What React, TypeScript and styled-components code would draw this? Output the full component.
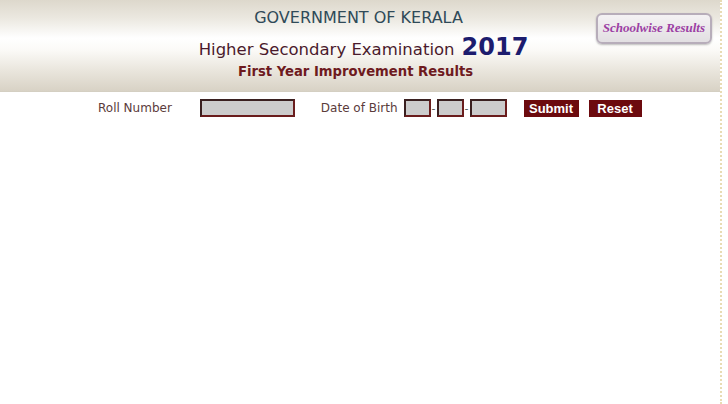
import React from "react";
import styled, { createGlobalStyle } from "styled-components";

const GlobalStyle = createGlobalStyle`
  html, body {
    margin: 0;
    padding: 0;
    background: #ffffff;
  }
  body {
    font-family: "DejaVu Sans", Verdana, sans-serif;
  }
`;

const Page = styled.div`
  width: 720px;
  height: 404px;
  border-right: 2px dotted #e8dcb4;
  box-sizing: content-box;
  overflow: hidden;
`;

const Header = styled.header`
  height: 91px;
  border-bottom: 1px solid #d4cfc2;
  background: linear-gradient(
    to bottom,
    #ddd8cc 0%,
    #ebe8e0 20%,
    #ffffff 42%,
    #fbfaf7 55%,
    #e9e5dc 78%,
    #d8d2c5 100%
  );
  display: grid;
  grid-template-columns: 1fr auto 1fr;
`;

const TitleBlock = styled.div`
  grid-column: 2;
  display: flex;
  flex-direction: column;
  align-items: center;
  padding-top: 9px;
`;

const Gov = styled.div`
  font-size: 16px;
  color: #2f4a58;
  line-height: 18px;
  margin-right: 3px;
`;

const ExamLine = styled.div`
  display: flex;
  align-items: baseline;
  gap: 7px;
  margin: 7px 0 0 7px;
  line-height: 26px;
`;

const Exam = styled.span`
  font-size: 16.5px;
  color: #4a1a2c;
`;

const Year = styled.span`
  font-size: 24px;
  font-weight: bold;
  color: #1c1c6e;
`;

const Sub = styled.div`
  font-size: 13.2px;
  font-weight: bold;
  color: #6e1a1e;
  line-height: 16px;
  margin: 1px 9px 0 0;
`;

const Side = styled.div`
  grid-column: 3;
  display: flex;
  justify-content: flex-end;
  align-items: flex-start;
  padding: 13px 8px 0 0;
`;

const SchoolButton = styled.a`
  display: block;
  padding: 5px 5px 6px;
  border: 2px solid #b7adba;
  border-radius: 6px;
  background: linear-gradient(to bottom, #f4f2f4, #e2dfe2);
  box-shadow: 0 1px 2px rgba(0, 0, 0, 0.25);
  font-family: "Liberation Serif", "Times New Roman", serif;
  font-style: italic;
  font-weight: bold;
  font-size: 13px;
  line-height: 16px;
  color: #9c3fa4;
  text-decoration: none;
  white-space: nowrap;
`;

const FormRow = styled.form`
  display: flex;
  align-items: center;
  height: 16px;
  padding: 8px 0 0 98px;
  margin: 0;
`;

const Label = styled.label<{ $gap: number }>`
  font-size: 12px;
  color: #5b3b3b;
  margin-right: ${(p) => p.$gap}px;
  white-space: nowrap;
`;

const Field = styled.input<{ $w: number; $gap?: number }>`
  width: ${(p) => p.$w}px;
  height: 18px;
  box-sizing: border-box;
  border: 2px solid #6a1c1c;
  border-top-color: #3a2020;
  border-left-color: #3a2020;
  background: #cccccc;
  padding: 0;
  margin: 0 ${(p) => p.$gap ?? 0}px 0 0;
`;

const Dash = styled.span`
  font-size: 11px;
  color: #555555;
  width: 6px;
  text-align: center;
`;

const Btn = styled.button<{ $w: number; $gap?: number }>`
  width: ${(p) => p.$w}px;
  height: 17px;
  padding: 0;
  border: none;
  background: #6c0a0e;
  color: #ffffff;
  font-family: "Liberation Sans", Arial, sans-serif;
  font-weight: bold;
  font-size: 13px;
  line-height: 17px;
  margin-right: ${(p) => p.$gap ?? 0}px;
  cursor: pointer;
`;

export default function App() {
  return (
    <>
      <GlobalStyle />
      <Page>
        <Header>
          <TitleBlock>
            <Gov>GOVERNMENT OF KERALA</Gov>
            <ExamLine>
              <Exam>Higher Secondary Examination</Exam>
              <Year>2017</Year>
            </ExamLine>
            <Sub>First Year Improvement Results</Sub>
          </TitleBlock>
          <Side>
            <SchoolButton href="#">Schoolwise Results</SchoolButton>
          </Side>
        </Header>
        <FormRow onSubmit={(e) => e.preventDefault()}>
          <Label $gap={28}>Roll Number</Label>
          <Field $w={95} $gap={26} />
          <Label $gap={6}>Date of Birth</Label>
          <Field $w={27} />
          <Dash>-</Dash>
          <Field $w={27} />
          <Dash>-</Dash>
          <Field $w={37} $gap={17} />
          <Btn type="submit" $w={55} $gap={10}>Submit</Btn>
          <Btn type="reset" $w={53}>Reset</Btn>
        </FormRow>
      </Page>
    </>
  );
}
